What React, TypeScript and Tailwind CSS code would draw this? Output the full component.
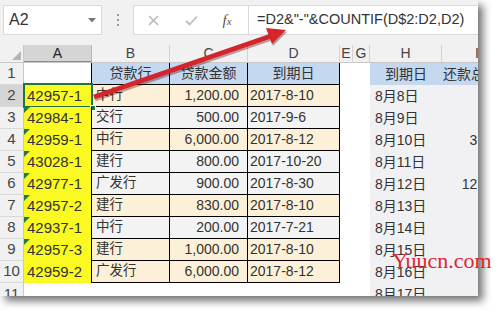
import React from "react";

type R = { a: string; b: string; c: string; d: string; h: string; i?: string; peach: boolean; tri: boolean };

const rows: R[] = [
  { a: "42957-1", b: "中行", c: "1,200.00", d: "2017-8-10", h: "8月8日", peach: true, tri: false },
  { a: "42984-1", b: "交行", c: "500.00", d: "2017-9-6", h: "8月9日", peach: false, tri: true },
  { a: "42959-1", b: "中行", c: "6,000.00", d: "2017-8-12", h: "8月10日", i: "3,030.00", peach: true, tri: true },
  { a: "43028-1", b: "建行", c: "800.00", d: "2017-10-20", h: "8月11日", peach: false, tri: true },
  { a: "42977-1", b: "广发行", c: "900.00", d: "2017-8-30", h: "8月12日", i: "12,000.00", peach: false, tri: true },
  { a: "42957-2", b: "建行", c: "830.00", d: "2017-8-10", h: "8月13日", peach: true, tri: true },
  { a: "42937-1", b: "中行", c: "200.00", d: "2017-7-21", h: "8月14日", peach: false, tri: true },
  { a: "42957-3", b: "建行", c: "1,000.00", d: "2017-8-10", h: "8月15日", peach: true, tri: true },
  { a: "42959-2", b: "广发行", c: "6,000.00", d: "2017-8-12", h: "8月16日", peach: true, tri: false },
];

function ColHead({ w, label, sel, extra }: { w: string; label: string; sel?: boolean; extra?: string }) {
  return (
    <div
      className={`${w} shrink-0 h-full flex items-center border-r text-[14px] ${extra ?? "justify-center"} ${
        sel
          ? "bg-[#d5d5d5] border-r-[#b8b8b8] border-b border-b-[#8c8c8c] text-[#222]"
          : "bg-[#f1f1f1] border-r-[#d3d3d3] text-[#444]"
      }`}
    >
      {label}
    </div>
  );
}

export default function App() {
  return (
    <div className="relative w-[501px] h-[318px] bg-white overflow-hidden font-['Liberation_Sans','Noto_Sans_CJK_SC',sans-serif]">
      <div className="w-[478px] h-[296px] overflow-hidden bg-white shadow-[5px_5px_8px_rgba(0,0,0,0.55)] flex flex-col">
        {/* formula bar */}
        <div className="h-[45px] shrink-0 bg-[#f1f1f1] flex items-start pt-[5px] pl-[3px]">
          <div className="w-[99px] h-[30px] shrink-0 bg-white border border-[#d9d9d9] flex items-center justify-between pl-[5px] pr-[5px]">
            <span className="text-[16px] text-[#333]">A2</span>
            <svg width="8" height="5" viewBox="0 0 8 5">
              <polygon points="0,0 8,0 4,4.5" fill="#777" />
            </svg>
          </div>
          <div className="w-[31px] h-[30px] shrink-0 flex flex-col items-center justify-center gap-[3px]">
            <div className="w-[2px] h-[2px] bg-[#9a9a9a]" />
            <div className="w-[2px] h-[2px] bg-[#9a9a9a]" />
            <div className="w-[2px] h-[2px] bg-[#9a9a9a]" />
          </div>
          <div className="w-[115px] h-[30px] shrink-0 bg-white border border-[#d9d9d9] border-r-0 flex items-center">
            <div className="w-[38px] flex justify-center">
              <svg width="11" height="11" viewBox="0 0 11 11">
                <path d="M1 1 L10 10 M10 1 L1 10" stroke="#b9b9b9" strokeWidth="1.6" />
              </svg>
            </div>
            <div className="w-[38px] flex justify-center">
              <svg width="13" height="11" viewBox="0 0 13 11">
                <path d="M1 6 L4.5 9.5 L12 1.5" stroke="#bdbdbd" strokeWidth="1.8" fill="none" />
              </svg>
            </div>
            <div className="w-[38px] flex justify-center pr-[4px]">
              <span className="font-['Liberation_Serif',serif] italic text-[15px] text-[#555]">
                f<span className="text-[11px]">x</span>
              </span>
            </div>
          </div>
          <div className="flex-1 h-[30px] bg-white border border-[#d9d9d9] border-r-0 flex items-center pl-[8px]">
            <span className="text-[14.5px] text-[#333] whitespace-nowrap">=D2&amp;"-"&amp;COUNTIF(D$2:D2,D2)</span>
          </div>
        </div>

        {/* column headers */}
        <div className="h-[18px] shrink-0 flex border-b border-[#c8c8c8] bg-[#f1f1f1]">
          <div className="w-[24px] shrink-0 h-full border-r border-[#c8c8c8] flex items-end justify-end pr-[2px] pb-[2px]">
            <svg width="9" height="9" viewBox="0 0 9 9">
              <polygon points="9,0 9,9 0,9" fill="#b4b4b4" />
            </svg>
          </div>
          <ColHead w="w-[68px]" label="A" sel />
          <ColHead w="w-[78px]" label="B" />
          <ColHead w="w-[78px]" label="C" />
          <ColHead w="w-[92px]" label="D" />
          <ColHead w="w-[13px]" label="E" />
          <ColHead w="w-[17px]" label="G" />
          <ColHead w="w-[72px]" label="H" />
          <ColHead w="w-[84px]" label="I" extra="justify-start pl-[33px]" />
        </div>

        {/* row 1 */}
        <div className="h-[22px] shrink-0 flex text-[14px] text-[#333]">
          <div className="w-[24px] shrink-0 bg-[#f1f1f1] border-r border-r-[#c8c8c8] border-b border-b-[#dadada] flex items-center justify-center text-[15px] text-[#444]">
            1
          </div>
          <div className="w-[68px] shrink-0 bg-white border-r border-black" />
          <div className="w-[78px] shrink-0 bg-[#c4d8ef] border-r border-b border-black flex items-center justify-center">贷款行</div>
          <div className="w-[78px] shrink-0 bg-[#c4d8ef] border-r border-b border-black flex items-center justify-center">贷款金额</div>
          <div className="w-[92px] shrink-0 bg-[#c4d8ef] border-r border-b border-black flex items-center justify-center">到期日</div>
          <div className="w-[13px] shrink-0 bg-white" />
          <div className="w-[17px] shrink-0 bg-white" />
          <div className="w-[72px] shrink-0 bg-[#c4d8ef] flex items-center justify-center">到期日</div>
          <div className="w-[84px] shrink-0 bg-[#c4d8ef] flex items-center pl-[1px] whitespace-nowrap">还款总额</div>
        </div>

        {rows.map((r, idx) => {
          const n = idx + 2;
          const bg = r.peach ? "bg-[#fdf0d8]" : "bg-[#f3f3f3]";
          return (
            <div key={n} className="h-[22px] shrink-0 flex text-[14px] text-[#333]">
              <div
                className={`w-[24px] shrink-0 border-r border-r-[#c8c8c8] border-b border-b-[#dadada] flex items-center justify-center text-[15px] text-[#444] ${
                  n === 2 ? "bg-[#d5d5d5]" : "bg-[#f1f1f1]"
                }`}
              >
                {n}
              </div>
              <div className="relative w-[68px] shrink-0 bg-[#fafa22] border-r border-black flex items-center pl-[3px] text-[15px]">
                {r.tri && (
                  <svg className="absolute left-0 top-0" width="6" height="6" viewBox="0 0 6 6">
                    <polygon points="0,0 6,0 0,6" fill="#1f7a3c" />
                  </svg>
                )}
                {n === 2 && (
                  <>
                    <div className="absolute left-[-1px] top-[-2px] right-[-2px] bottom-[-1px] border-2 border-[#217346]" />
                    <div className="absolute right-[-5px] bottom-[-4px] w-[6px] h-[6px] bg-[#217346] border border-white" />
                  </>
                )}
                <span className="relative">{r.a}</span>
              </div>
              <div className={`w-[78px] shrink-0 ${bg} border-r border-b border-black flex items-center pl-[4px] text-[13.5px]`}>{r.b}</div>
              <div className={`w-[78px] shrink-0 ${bg} border-r border-b border-black flex items-center justify-end pr-[8px]`}>{r.c}</div>
              <div className={`w-[92px] shrink-0 ${bg} border-r border-b border-black flex items-center pl-[2px]`}>{r.d}</div>
              <div className="w-[13px] shrink-0 bg-white" />
              <div className="w-[17px] shrink-0 bg-white" />
              <div className="w-[72px] shrink-0 bg-[#f1f1f4] flex items-center pl-[5px]">{r.h}</div>
              <div className="w-[84px] shrink-0 bg-[#f1f1f4] flex items-center justify-end pr-[2px]">{r.i ?? ""}</div>
            </div>
          );
        })}

        {/* row 11 */}
        <div className="h-[22px] shrink-0 flex text-[14px] text-[#333]">
          <div className="w-[24px] shrink-0 bg-[#f1f1f1] border-r border-r-[#c8c8c8] flex items-center justify-center text-[15px] text-[#444]">
            11
          </div>
          <div className="w-[68px] shrink-0 bg-white" />
          <div className="w-[78px] shrink-0 bg-white" />
          <div className="w-[78px] shrink-0 bg-white" />
          <div className="w-[92px] shrink-0 bg-white" />
          <div className="w-[13px] shrink-0 bg-white" />
          <div className="w-[17px] shrink-0 bg-white" />
          <div className="w-[72px] shrink-0 bg-[#f1f1f4] flex items-center pl-[5px]">8月17日</div>
          <div className="w-[84px] shrink-0 bg-[#f1f1f4]" />
        </div>
      </div>

      {/* red arrow */}
      <svg className="absolute left-0 top-0 pointer-events-none" width="501" height="318" viewBox="0 0 501 318">
        <line x1="94" y1="97" x2="271" y2="36" stroke="rgba(80,0,0,0.35)" strokeWidth="5" transform="translate(1,2)" />
        <polygon points="286,30 266,28 272,44" fill="rgba(80,0,0,0.35)" transform="translate(1,2)" />
        <line x1="94" y1="97" x2="271" y2="36" stroke="#d3252b" strokeWidth="5" />
        <polygon points="286,30 266,28 272,44" fill="#d3252b" />
      </svg>

      {/* watermark */}
      <div className="absolute left-[392px] top-[250px] font-['Liberation_Serif',serif] text-[22px] leading-none text-[#e0232d] whitespace-nowrap">
        Yuucn.com
      </div>
    </div>
  );
}
